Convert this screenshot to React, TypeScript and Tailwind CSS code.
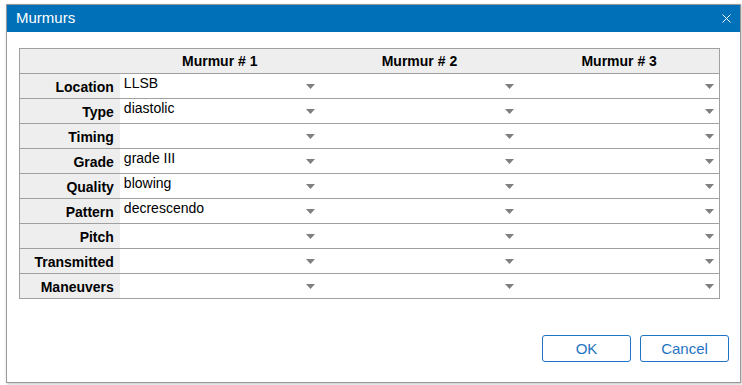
import React from 'react';

const rows: [string, string][] = [
  ['Location', 'LLSB'],
  ['Type', 'diastolic'],
  ['Timing', ''],
  ['Grade', 'grade III'],
  ['Quality', 'blowing'],
  ['Pattern', 'decrescendo'],
  ['Pitch', ''],
  ['Transmitted', ''],
  ['Maneuvers', ''],
];

function Caret() {
  return (
    <svg width="9" height="5" viewBox="0 0 9 5" className="shrink-0">
      <path d="M0 0 L9 0 L4.5 5 Z" fill="#7f7f7f" />
    </svg>
  );
}

function Cell({ value }: { value: string }) {
  return (
    <div className="w-[200px] h-full flex items-start justify-between pl-[4px] pr-[5px] pt-[1px]">
      <span className="leading-[16px]">{value}</span>
      <div className="pt-[9px]">
        <Caret />
      </div>
    </div>
  );
}

export default function App() {
  return (
    <div className="w-[742px] h-[385px] bg-white pt-[4px] pl-[6px] font-['Liberation_Sans',Arial,sans-serif] text-[14px] text-black">
      <div className="w-[735px] h-[379px] border border-[#9a9a9a] bg-white shadow-[1px_1px_3px_rgba(0,0,0,0.25)] flex flex-col">
        {/* Title bar */}
        <div className="h-[27px] bg-[#0070b8] flex items-center justify-between pl-[9px] pr-[9px]">
          <span className="text-white text-[15px]">Murmurs</span>
          <svg width="9" height="9" viewBox="0 0 9 9">
            <path d="M0.5 0.5 L8.5 8.5 M8.5 0.5 L0.5 8.5" stroke="#ffffff" strokeWidth="1" />
          </svg>
        </div>

        {/* Table */}
        <div className="pl-[12px] pt-[16px]">
          <div className="w-[701px] border border-[#a0a0a0]">
            <div className="h-[24px] flex bg-[#eeeeee] font-bold">
              <div className="w-[100px]" />
              {['Murmur # 1', 'Murmur # 2', 'Murmur # 3'].map((h) => (
                <div key={h} className="w-[200px] flex items-center justify-center">
                  {h}
                </div>
              ))}
            </div>
            {rows.map(([label, value]) => (
              <div key={label} className="h-[25px] flex border-t border-[#a0a0a0]">
                <div className="w-[100px] bg-[#eeeeee] font-bold flex items-center justify-end pr-[6px] pt-[2px]">
                  {label}
                </div>
                <Cell value={value} />
                <Cell value="" />
                <Cell value="" />
              </div>
            ))}
          </div>
        </div>

        {/* Buttons */}
        <div className="mt-auto flex justify-end gap-[9px] pr-[11px] pb-[20px]">
          <button className="w-[89px] h-[27px] border border-[#1f74c4] rounded-[3px] text-[#1f74c4] text-[15px] bg-white pt-[1px]">
            OK
          </button>
          <button className="w-[89px] h-[27px] border border-[#1f74c4] rounded-[3px] text-[#1f74c4] text-[15px] bg-white pt-[1px]">
            Cancel
          </button>
        </div>
      </div>
    </div>
  );
}
